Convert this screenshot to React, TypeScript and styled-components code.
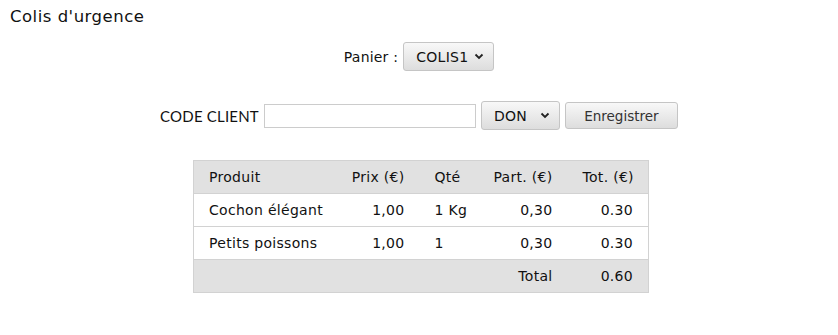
import React from "react";
import styled, { createGlobalStyle } from "styled-components";

const Global = createGlobalStyle`
  html, body { margin: 0; padding: 0; background: #fff; }
  body { font-family: "DejaVu Sans", "Open Sans", sans-serif; color: #111; }
`;

const Page = styled.div`
  padding: 6px 10px 0 10px;
  display: flex;
  flex-direction: column;
`;

const Title = styled.h1`
  margin: 0;
  font-size: 16.5px;
  font-weight: 400;
  line-height: 22px;
  letter-spacing: 0.5px;
`;

const Row = styled.div<{ $mt: number }>`
  display: flex;
  justify-content: center;
  align-items: center;
  gap: 5px;
  margin-top: ${(p) => p.$mt}px;
`;

const Label = styled.span<{ $upper?: boolean }>`
  font-size: ${(p) => (p.$upper ? "15px" : "14px")};
  font-family: ${(p) => (p.$upper ? '"Lato", sans-serif' : '"DejaVu Sans", sans-serif')};
  letter-spacing: 0.2px;
`;

const SelectBtn = styled.button<{ $w: number; $h: number }>`
  width: ${(p) => p.$w}px;
  height: ${(p) => p.$h}px;
  border: 1px solid #c5c5c5;
  border-radius: 3px;
  background: linear-gradient(#f8f8f8, #dddddd);
  display: flex;
  align-items: center;
  justify-content: space-between;
  padding: 0 9px 0 12px;
  font-family: "DejaVu Sans", sans-serif;
  font-size: 14px;
  letter-spacing: 0.3px;
  font-weight: 400;
  color: #111;
  cursor: pointer;
`;

const Button = styled.button`
  width: 113px;
  height: 27px;
  border: 1px solid #c5c5c5;
  border-radius: 3px;
  background: linear-gradient(#f8f8f8, #dddddd);
  font-family: "DejaVu Sans", sans-serif;
  font-size: 13.5px;
  color: #333;
  padding: 0;
`;

const Input = styled.input`
  width: 212px;
  height: 24px;
  box-sizing: border-box;
  border: 1px solid #cccccc;
  margin: 0;
  padding: 0 4px;
`;

const Chevron = () => (
  <svg width="10" height="7" viewBox="0 0 10 7">
    <path d="M1.5 1.5 L5 5 L8.5 1.5" fill="none" stroke="#222" strokeWidth="1.8" />
  </svg>
);

const Table = styled.table`
  margin: 30px auto 0;
  border-collapse: collapse;
  border: 1px solid #d2d2d2;
  width: 455px;
  table-layout: fixed;
  font-size: 14px;
  letter-spacing: 0.3px;
  position: relative;
  left: 2px;
`;

const Tr = styled.tr<{ $shade?: boolean }>`
  background: ${(p) => (p.$shade ? "#e1e1e1" : "#fff")};
  border-top: 1px solid #d2d2d2;
  height: 33px;
`;

const Cell = styled.td<{ $right?: boolean }>`
  padding: 0 15px;
  text-align: ${(p) => (p.$right ? "right" : "left")};
  white-space: nowrap;
  font-weight: 400;
`;

const rows = [
  ["Cochon élégant", "1,00", "1 Kg", "0,30", "0.30"],
  ["Petits poissons", "1,00", "1", "0,30", "0.30"],
];

export default function App() {
  return (
    <Page>
      <Global />
      <Title>Colis d'urgence</Title>
      <Row $mt={14}>
        <Label>Panier :</Label>
        <SelectBtn $w={91} $h={29}>
          COLIS1 <Chevron />
        </SelectBtn>
      </Row>
      <Row $mt={30}>
        <Label $upper>CODE CLIENT</Label>
        <Input type="text" />
        <SelectBtn $w={79} $h={29}>
          DON <Chevron />
        </SelectBtn>
        <Button>Enregistrer</Button>
      </Row>
      <Table>
        <colgroup>
          <col style={{ width: 128 }} />
          <col style={{ width: 98 }} />
          <col style={{ width: 55 }} />
          <col style={{ width: 93 }} />
          <col style={{ width: 81 }} />
        </colgroup>
        <thead>
          <Tr $shade>
            <Cell as="th">Produit</Cell>
            <Cell as="th" $right>Prix (€)</Cell>
            <Cell as="th">Qté</Cell>
            <Cell as="th" $right>Part. (€)</Cell>
            <Cell as="th" $right>Tot. (€)</Cell>
          </Tr>
        </thead>
        <tbody>
          {rows.map((r) => (
            <Tr key={r[0]}>
              <Cell>{r[0]}</Cell>
              <Cell $right>{r[1]}</Cell>
              <Cell>{r[2]}</Cell>
              <Cell $right>{r[3]}</Cell>
              <Cell $right>{r[4]}</Cell>
            </Tr>
          ))}
          <Tr $shade>
            <Cell />
            <Cell />
            <Cell />
            <Cell $right>Total</Cell>
            <Cell $right>0.60</Cell>
          </Tr>
        </tbody>
      </Table>
    </Page>
  );
}
